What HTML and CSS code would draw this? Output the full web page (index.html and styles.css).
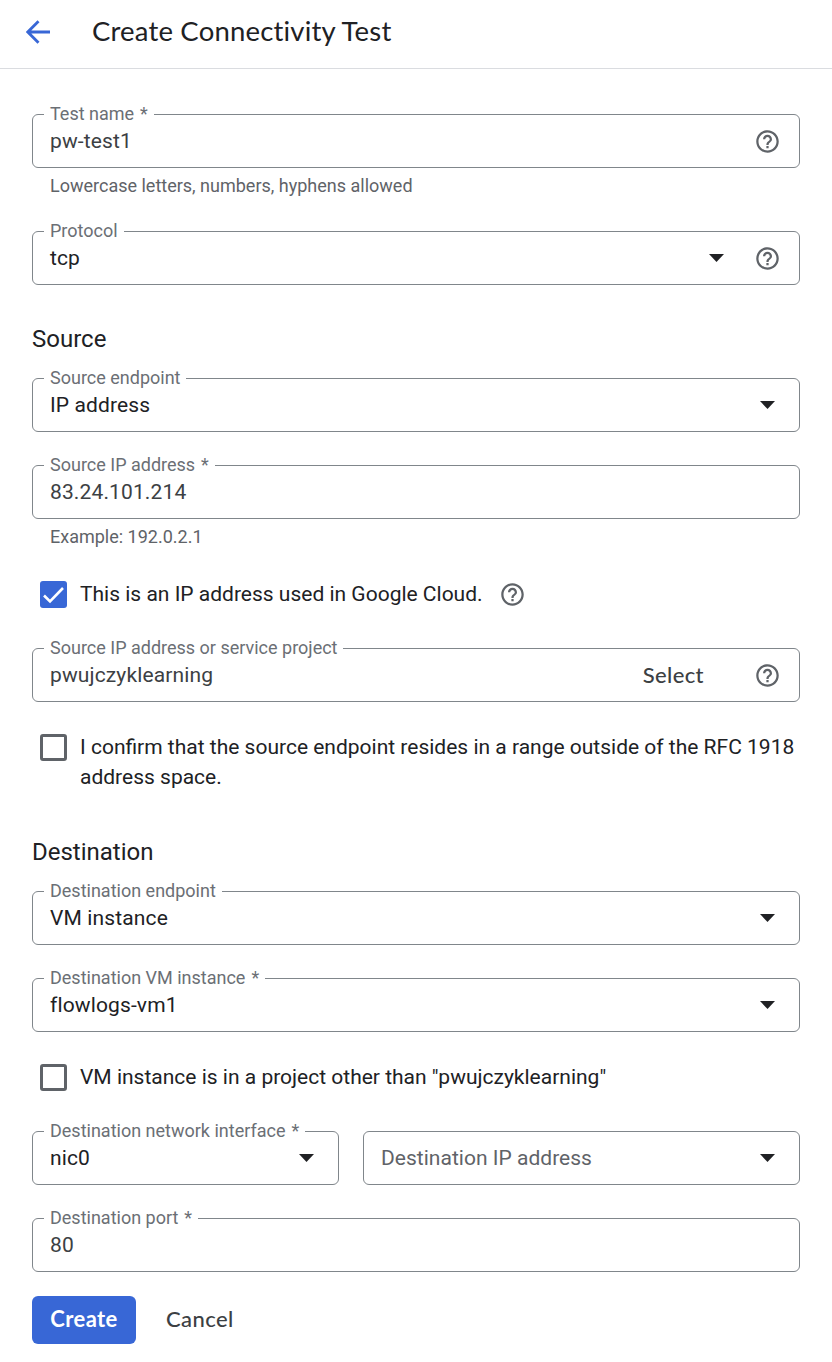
FILE: index.html
```html
<!DOCTYPE html>
<html lang="en">
<head>
<meta charset="utf-8">
<title>Create Connectivity Test</title>
<link rel="stylesheet" href="styles.css">
</head>
<body>
<svg class="defs" aria-hidden="true">
  <symbol id="help" viewBox="0 0 24 24"><path d="M11 18h2v-2h-2v2zm1-16C6.48 2 2 6.48 2 12s4.480 10 10 10 10-4.480 10-10S17.520 2 12 2zm0 18c-4.410 0-8-3.590-8-8s3.590-8 8-8 8 3.590 8 8-3.590 8-8 8zm0-14c-2.210 0-4 1.790-4 4h2c0-1.100.9-2 2-2s2 .9 2 2c0 2-3 1.750-3 5h2c0-2.250 3-2.500 3-5 0-2.210-1.790-4-4-4z"/></symbol>
  <symbol id="caret" viewBox="0 0 15 8"><path d="M0 0h15L7.500 8z"/></symbol>
</svg>
<header class="topbar">
  <svg class="back" viewBox="0 0 24 24"><path d="M24 12H2M12.500 1.200L1.800 12L12.500 22.800"/></svg>
  <h1 class="title">Create Connectivity Test</h1>
</header>
<main class="form">
  <div class="field">
    <span class="label">Test name <span class="star">*</span></span>
    <span class="value">pw-test1</span>
    <svg class="help"><use href="#help"/></svg>
  </div>
  <p class="hint">Lowercase letters, numbers, hyphens allowed</p>

  <div class="field">
    <span class="label">Protocol</span>
    <span class="value dark">tcp</span>
    <svg class="caret"><use href="#caret"/></svg>
    <svg class="help"><use href="#help"/></svg>
  </div>

  <h2 class="section">Source</h2>
  <div class="field">
    <span class="label">Source endpoint</span>
    <span class="value dark">IP address</span>
    <svg class="caret"><use href="#caret"/></svg>
  </div>
  <div class="field spaced">
    <span class="label">Source IP address <span class="star">*</span></span>
    <span class="value">83.24.101.214</span>
  </div>
  <p class="hint">Example: 192.0.2.1</p>

  <div class="check first">
    <span class="box checked"><svg class="tick" viewBox="0 0 27 27"><path d="M4 14.500l6 6L23 7"/></svg></span>
    <span class="text">This is an IP address used in Google Cloud.</span>
    <svg class="help"><use href="#help"/></svg>
  </div>

  <div class="field project">
    <span class="label">Source IP address or service project</span>
    <span class="value">pwujczyklearning</span>
    <span class="select">Select</span>
    <svg class="help"><use href="#help"/></svg>
  </div>

  <div class="check confirm">
    <span class="box"></span>
    <span class="text">I confirm that the source endpoint resides in a range outside of the RFC 1918 address space.</span>
  </div>

  <h2 class="section destination">Destination</h2>
  <div class="field">
    <span class="label">Destination endpoint</span>
    <span class="value dark">VM instance</span>
    <svg class="caret"><use href="#caret"/></svg>
  </div>
  <div class="field spaced">
    <span class="label">Destination VM instance <span class="star">*</span></span>
    <span class="value dark">flowlogs-vm1</span>
    <svg class="caret"><use href="#caret"/></svg>
  </div>

  <div class="check other">
    <span class="box"></span>
    <span class="text">VM instance is in a project other than "pwujczyklearning"</span>
  </div>

  <div class="pair">
    <div class="field">
      <span class="label">Destination network interface <span class="star">*</span></span>
      <span class="value dark">nic0</span>
      <svg class="caret"><use href="#caret"/></svg>
    </div>
    <div class="field">
      <span class="value placeholder">Destination IP address</span>
      <svg class="caret"><use href="#caret"/></svg>
    </div>
  </div>
  <div class="field spaced">
    <span class="label">Destination port <span class="star">*</span></span>
    <span class="value">80</span>
  </div>

  <div class="actions">
    <button class="btn primary">Create</button>
    <button class="btn">Cancel</button>
  </div>
</main>
</body>
</html>
```
FILE: styles.css
```css
* { box-sizing: border-box; }
body {
  margin: 0;
  background: #fff;
  color: #202124;
  font-family: Roboto, sans-serif;
  font-size: 21px;
  line-height: 30px;
}
.defs { display: none; }
.topbar {
  display: flex;
  align-items: center;
  gap: 42px;
  height: 69px;
  padding: 0 26px 5px;
  border-bottom: 1px solid #dadce0;
}
.back { width: 24px; height: 24px; fill: none; stroke: #3867d6; stroke-width: 2.8; }
.title {
  margin: 0 0 2px;
  font: 400 27.5px/36px Lato, sans-serif;
  letter-spacing: 0.18px;
  white-space: nowrap;
}
.form { display: flex; flex-direction: column; padding: 45px 32px 18px; }
.field {
  position: relative;
  display: flex;
  align-items: center;
  height: 54px;
  padding: 0 17px;
  border: 1px solid #80868b;
  border-radius: 6px;
}
.field.spaced { margin-top: 33px; }
.label {
  position: absolute;
  left: 11px;
  top: -13px;
  padding: 0 6px;
  background: #fff;
  color: #6b6f75;
  font-size: 18px;
  line-height: 24px;
  white-space: nowrap;
}
.star { margin-left: 1.5px; }
.value { flex: 1; color: #3c4043; letter-spacing: 0.13px; white-space: nowrap; }
.value.dark { color: #202124; }
.value.placeholder { color: #5f6368; letter-spacing: 0.02px; }
.help { flex: none; width: 27px; height: 27px; fill: #5f6368; }
.caret { flex: none; width: 15px; height: 8px; margin-right: 7.5px; fill: #202124; }
.caret + .help { margin-left: 23px; }
.field > .help { margin-right: 1px; }
.hint {
  margin: 6px 0 33px;
  padding-left: 18px;
  color: #5f6368;
  font-size: 18px;
  line-height: 24px;
}
.section { margin: 36px 0 21px; font-size: 24px; line-height: 36px; font-weight: 400; }
.check { display: flex; align-items: flex-start; padding-left: 8px; }
.check .text { margin-left: 13px; }
.check .help { margin: 2px 0 0 16px; }
.box {
  flex: none;
  width: 27px;
  height: 27px;
  margin-top: 2px;
  border: 3px solid #5f6368;
  border-radius: 3px;
}
.box.checked { border: 0; background: #3867d6; }
.tick { display: block; width: 27px; height: 27px; fill: none; stroke: #fff; stroke-width: 2.6; }
.check.first { margin-top: -3px; }
.project { margin-top: 39px; }
.confirm { margin-top: 30px; }
.section.destination { margin-top: 42px; }
.other { margin-top: 30px; }
.pair { display: grid; grid-template-columns: 307px 1fr; gap: 24px; margin-top: 39px; }
.select {
  margin: 0 50px 1px 0;
  color: #3c4043;
  font: 500 22px/30px Lato, sans-serif;
  letter-spacing: 0.4px;
}
.actions { display: flex; gap: 12px; margin-top: 24px; }
.btn {
  height: 48px;
  padding: 0 18px 2px;
  border: 0;
  border-radius: 6px;
  background: none;
  color: #3c4043;
  font: 500 22px/46px Lato, sans-serif;
  letter-spacing: 0.4px;
}
.btn.primary {
  width: 104px;
  padding: 0 0 2px;
  background: #3867d6;
  color: #fff;
  font-weight: 700;
}
```
